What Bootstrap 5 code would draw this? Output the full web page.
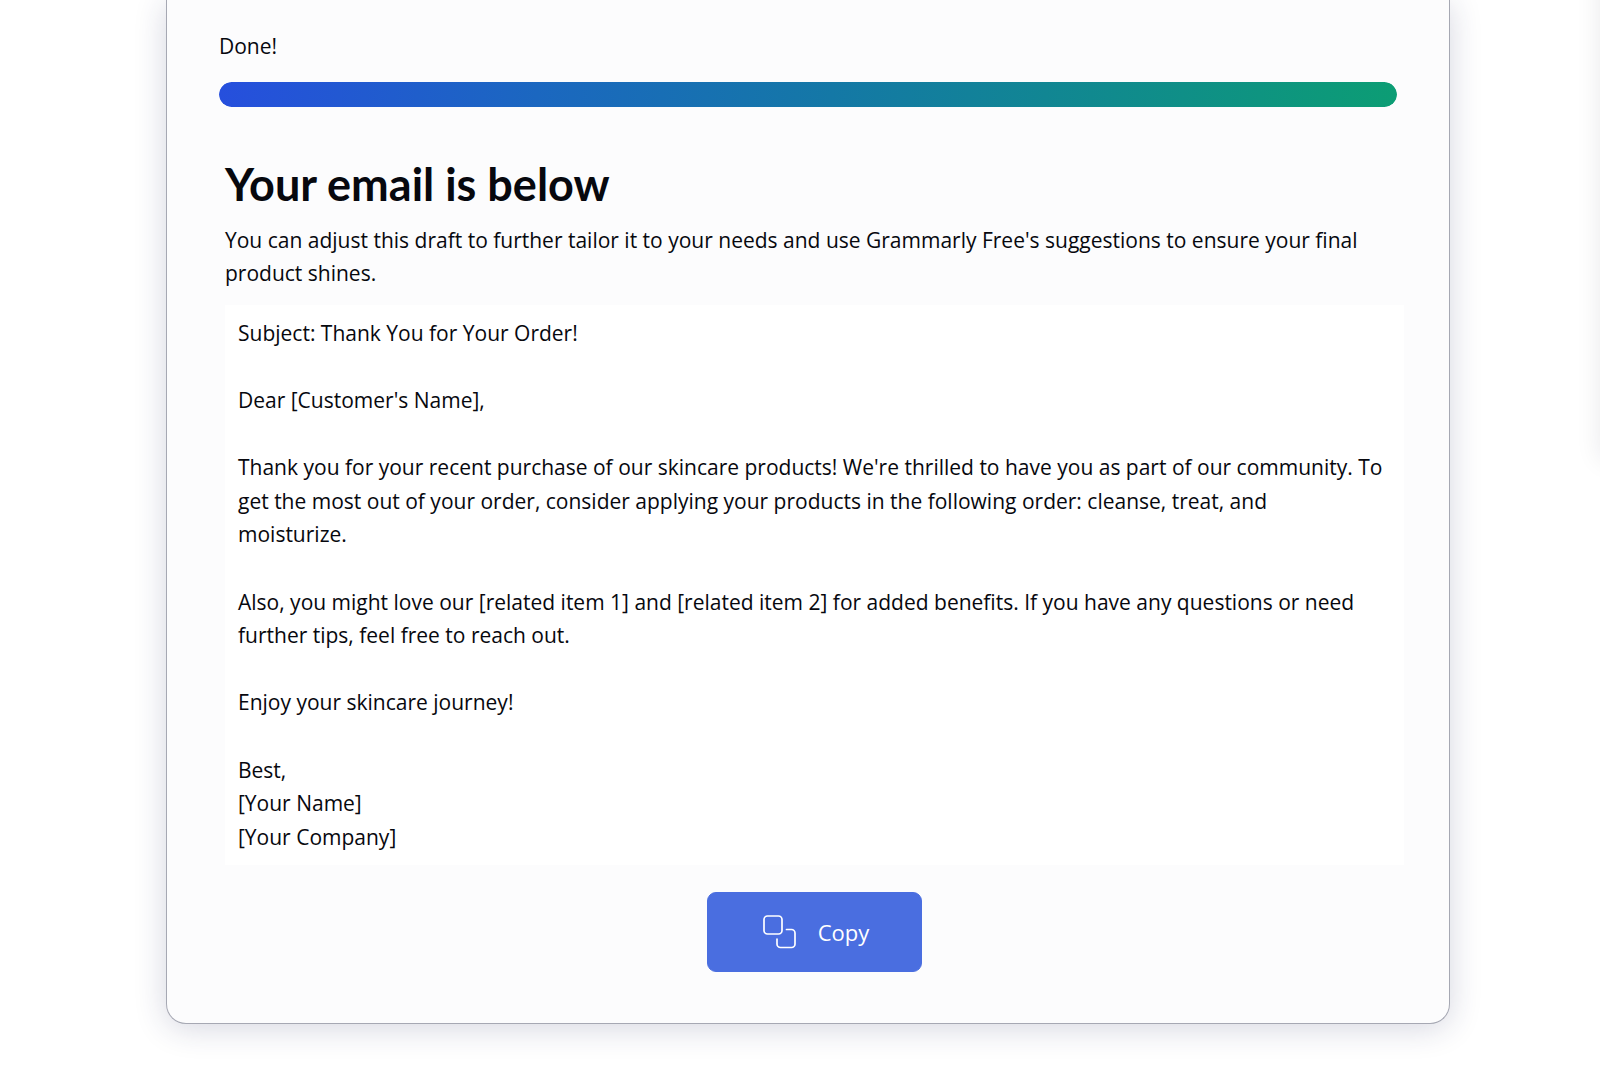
<!DOCTYPE html>
<html lang="en">
<head>
<meta charset="utf-8">
<meta name="viewport" content="width=device-width, initial-scale=1">
<title>Your email is below</title>
<link href="https://cdn.jsdelivr.net/npm/bootstrap@5.3.0/dist/css/bootstrap.min.css" rel="stylesheet">
<style>
  body {
    font-family: "Open Sans", "Noto Sans", sans-serif;
    font-size: 21px;
    line-height: 1.6;
    color: #07080e;
    background: #fff;
  }
  .stage {
    padding: 0 150px 49px 166px;
    overflow: hidden;
  }
  /* soft edge of the panel that lies beyond the window */
  .next-panel {
    top: -60px;
    left: 100%;
    width: 80px;
    height: 520px;
    box-shadow: 0 0 24px rgba(20, 24, 40, .09);
  }
  .result-card {
    padding: 30px 52px 51px;
    background: #fcfcfd;
    border: 1px solid #a6a8b3;
    border-top: 0;
    border-radius: 0 0 20px 20px;
    box-shadow: 0 4px 32px rgba(30, 36, 90, .19);
  }
  .progress-track {
    height: 25px;
    margin-top: 18px;
    border-radius: 13px;
    background: #fcfcfd;
  }
  .progress-fill {
    border-radius: 13px;
    background: linear-gradient(90deg, #264fdd, #1b67c0 27%, #1478a6 52%, #0c9d74);
  }
  .result-body {
    margin: 51px -7px 0 6px;
  }
  .result-title {
    margin: 0 0 14px;
    font-family: Lato, sans-serif;
    font-size: 45px;
    font-weight: 700;
    line-height: 52px;
  }
  .email-draft {
    margin-top: 14px;
    padding: 12px 12px 11px 13px;
    background: #fff;
    outline: 0;
  }
  .email-draft p { margin: 0 0 1.6em; }
  .email-draft p:last-child { margin: 0; }
  .copy-btn {
    --bs-btn-color: #fff;
    --bs-btn-bg: #4a6ee0;
    --bs-btn-border-color: #4a6ee0;
    --bs-btn-hover-color: #fff;
    --bs-btn-hover-bg: #3b5fd0;
    --bs-btn-hover-border-color: #3b5fd0;
    --bs-btn-border-radius: 9px;
    --bs-btn-font-size: 22px;
    --bs-btn-font-weight: 500;
    --bs-btn-padding-x: 52px;
    height: 80px;
    margin-top: 27px;
    gap: 20px;
  }
</style>
</head>
<body>
<main class="stage position-relative">
  <div class="next-panel position-absolute"></div>
  <section class="result-card">
    <div id="status">Done!</div>
    <div class="progress progress-track" role="progressbar" aria-labelledby="status" aria-valuenow="100" aria-valuemin="0" aria-valuemax="100">
      <div class="progress-bar progress-fill w-100"></div>
    </div>
    <div class="result-body">
      <h2 class="result-title">Your email is below</h2>
      <p class="mb-0">You can adjust this draft to further tailor it to your needs and use Grammarly Free's suggestions to ensure your final product shines.</p>
      <div class="email-draft" contenteditable="true" role="textbox" aria-multiline="true" aria-label="Email draft" spellcheck="false">
        <p>Subject: Thank You for Your Order!</p>
        <p>Dear [Customer's Name],</p>
        <p>Thank you for your recent purchase of our skincare products! We're thrilled to have you as part of our community. To get the most out of your order, consider applying your products in the following order: cleanse, treat, and<br>moisturize.</p>
        <p>Also, you might love our [related item 1] and [related item 2] for added benefits. If you have any questions or need further tips, feel free to reach out.</p>
        <p>Enjoy your skincare journey!</p>
        <p>Best,<br>[Your Name]<br>[Your Company]</p>
      </div>
      <div class="d-flex justify-content-center">
        <button type="button" class="btn copy-btn d-inline-flex align-items-center">
          <svg width="38" height="38" viewBox="0 0 38 38" fill="none" stroke="#fff" stroke-width="1.7" stroke-linecap="round" aria-hidden="true">
            <rect x="4" y="3" width="18" height="18" rx="3.5"/>
            <path d="M26.500 16.500h5a3.500 3.500 0 0 1 3.500 3.500v11a3.500 3.500 0 0 1-3.500 3.500H20.500a3.500 3.500 0 0 1-3.500-3.500v-5"/>
          </svg>
          <span>Copy</span>
        </button>
      </div>
    </div>
  </section>
</main>
<script src="https://cdn.jsdelivr.net/npm/bootstrap@5.3.0/dist/js/bootstrap.bundle.min.js"></script>
</body>
</html>
